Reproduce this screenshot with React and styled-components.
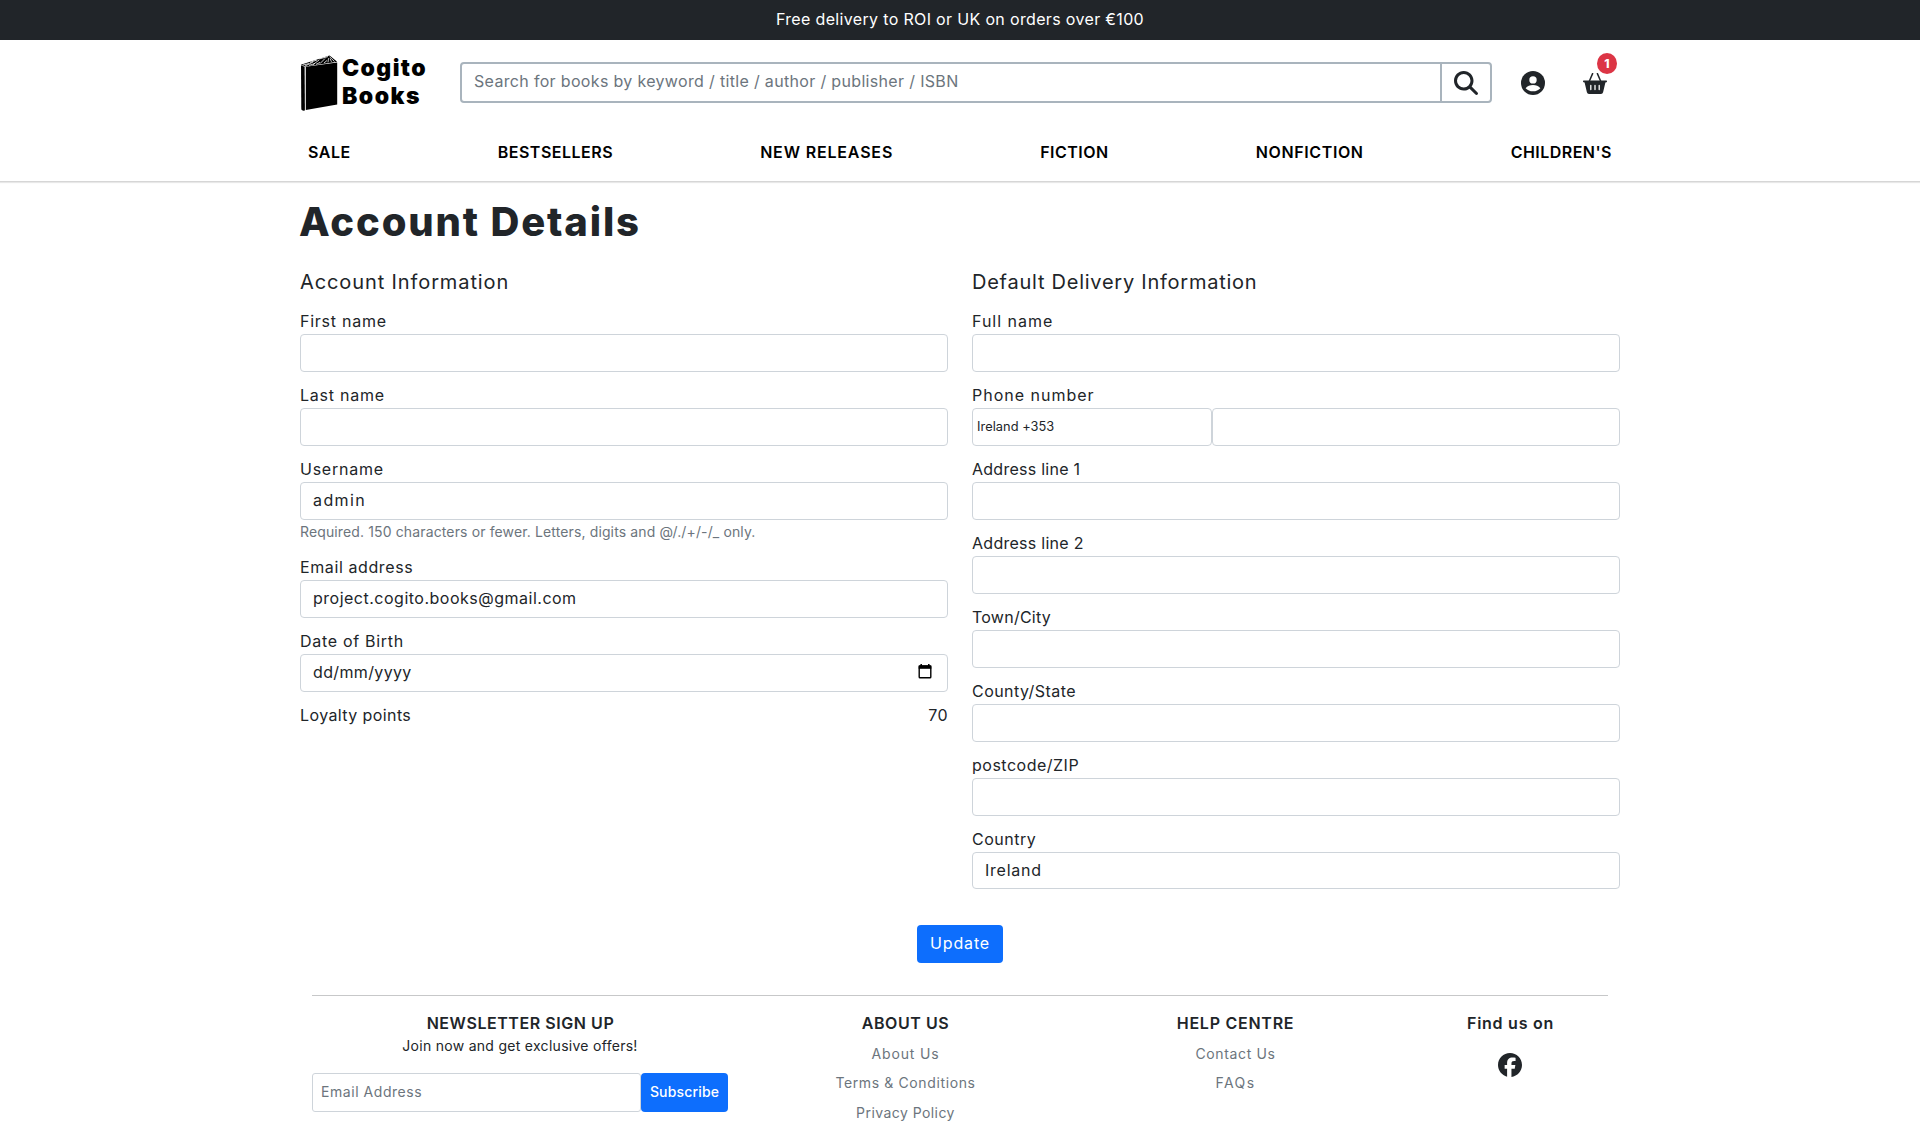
import React from "react";
import styled, { createGlobalStyle } from "styled-components";
import { FaFacebook, FaMagnifyingGlass } from "react-icons/fa6";

const GlobalStyle = createGlobalStyle`
  *, *::before, *::after { box-sizing: border-box; }
  body {
    margin: 0;
    background: #fff;
    color: #212529;
    font-family: Inter, "Open Sans", sans-serif;
    font-size: 16px;
    line-height: 24px;
  }
  input, button { font: inherit; color: inherit; }
  h1, h2, h3, p, ul { margin: 0; padding: 0; font-weight: 400; }
`;

/* Text with per-string tracking */
const Text = styled.span`
  letter-spacing: ${(p) => p.$track || 0}px;
  white-space: nowrap;
`;

const TopBar = styled.div`
  height: 40px;
  padding-top: 7px;
  background: #212529;
  color: #fff;
  text-align: center;
`;

const Header = styled.header`
  height: 142px;
  border-bottom: 1px solid #d6d6d6;
  box-shadow: 0 1px 1px rgba(0, 0, 0, 0.09);
`;

const Container = styled.div`
  width: 1320px;
  margin: 0 auto;
`;

const Brand = styled.div`
  display: flex;
  width: 160px;
  height: 59px;
`;

const BrandName = styled.div`
  margin: 0 0 0 4px;
  color: #000;
  font-size: 23px;
  font-weight: 900;
  line-height: 28px;
`;

const Line = styled.div`
  letter-spacing: ${(p) => p.$track}px;
`;

const HeaderRow = styled.div`
  display: flex;
  align-items: flex-start;
  height: 100px;
  padding-top: 14px;
`;

const SearchBox = styled.div`
  display: flex;
  width: 1032px;
  height: 41px;
  margin-top: 8px;
  border: 2px solid #a9b4bd;
  border-radius: 4px;
`;

const SearchInput = styled.input`
  flex: 1;
  min-width: 0;
  padding: 0 12px 3px;
  border: 0;
  background: none;
  letter-spacing: 0.33px;
  &::placeholder { color: #6c757d; opacity: 1; }
`;

const SearchButton = styled.button`
  display: flex;
  align-items: center;
  justify-content: center;
  width: 50px;
  padding: 0;
  border: 0;
  border-left: 2px solid #a9b4bd;
  background: none;
`;

const IconLink = styled.a`
  position: relative;
  display: flex;
  width: 24px;
  margin: ${(p) => p.$top}px 0 0 ${(p) => p.$gap}px;
  color: #212529;
`;

const Badge = styled.span`
  position: absolute;
  left: 14px;
  top: -20px;
  width: 20px;
  height: 21px;
  border-radius: 50%;
  background: #dc3545;
  color: #fff;
  font-size: 12px;
  font-weight: 800;
  line-height: 21px;
  text-align: center;
`;

const Nav = styled.nav`
  display: flex;
  justify-content: space-between;
  padding: 0 8px;
  color: #000;
  font-weight: 600;
`;

const Title = styled.h1`
  margin: 16px 0 0 -1px;
  font-size: 40px;
  font-weight: 800;
  line-height: 48px;
  letter-spacing: 1.84px;
`;

const Columns = styled.div`
  display: grid;
  grid-template-columns: 1fr 1fr;
  column-gap: 24px;
  margin-top: 24px;
`;

const Heading = styled.h2`
  margin-bottom: 15px;
  font-size: 20px;
  line-height: 24px;
`;

const Field = styled.div`
  margin-bottom: 11px;
`;

const Label = styled.label`
  display: block;
  padding-bottom: 1px;
`;

const Control = styled.div`
  display: flex;
  align-items: center;
  justify-content: space-between;
  width: ${(p) => p.$width || "100%"};
  height: ${(p) => p.$height || 38}px;
  padding: ${(p) => (p.$compact ? "0 4px" : "0 15px 2px 12px")};
  border: 1px solid #ced4da;
  border-radius: 4px;
  font-size: ${(p) => (p.$compact ? 12.8 : 16)}px;
`;

const Split = styled.div`
  display: flex;
`;

const Help = styled.div`
  height: 24px;
  margin: -0.5px 0 0.5px;
  color: #6c757d;
  font-size: 14px;
`;

const Points = styled.div`
  display: flex;
  justify-content: space-between;
`;

const Actions = styled.div`
  display: flex;
  justify-content: center;
  margin-top: 25px;
`;

const PrimaryButton = styled.button`
  width: ${(p) => p.$width}px;
  height: ${(p) => p.$height}px;
  padding: 0 0 ${(p) => (p.$size ? 1 : 3)}px;
  border: 0;
  border-radius: 4px;
  background: #0d6efd;
  color: #fff;
  font-size: ${(p) => p.$size || 16}px;
  font-weight: ${(p) => p.$weight || 400};
`;

const Divider = styled.div`
  height: 1px;
  margin: 32px 12px 15px;
  background: #c7c8c9;
`;

const FooterRow = styled.footer`
  display: flex;
`;

const FooterCol = styled.section`
  display: flex;
  flex-direction: column;
  align-items: center;
  width: ${(p) => p.$width}px;
  padding: 0 12px;
`;

const FooterTitle = styled.h3`
  padding-left: 1px;
  font-size: 16px;
  font-weight: 600;
`;

const Tagline = styled.p`
  font-size: 14px;
  line-height: 21px;
`;

const Subscribe = styled.form`
  display: flex;
  width: 100%;
  margin-top: 17px;
`;

const EmailInput = styled.input`
  flex: 1;
  min-width: 0;
  height: 39px;
  padding: 0 8px 2px;
  border: 1px solid #ced4da;
  border-radius: 3px;
  font-size: 14px;
  letter-spacing: 0.55px;
  &::placeholder { color: #6c757d; opacity: 1; }
`;

const Links = styled.ul`
  display: flex;
  flex-direction: column;
  gap: 5.4px;
  margin-top: 6.9px;
  padding-left: 1px;
  color: #6c757d;
  font-size: 14px;
  list-style: none;
  text-align: center;
`;

const Social = styled.div`
  display: flex;
  margin-top: 18px;
`;

const NAV = [
  ["SALE", 0.5],
  ["BESTSELLERS", 0.5],
  ["NEW RELEASES", 0.83],
  ["FICTION", 0.5],
  ["NONFICTION", 0.62],
  ["CHILDREN'S", 0.46],
];

const ADDRESS = [
  ["Address line 1", 0.26],
  ["Address line 2", 0.27],
  ["Town/City", 0.24],
  ["County/State", 0.45],
  ["postcode/ZIP", 0.5],
];

const ABOUT = [
  ["About Us", 0.83],
  ["Terms & Conditions", 0.62],
  ["Privacy Policy", 0.44],
];

const HELP = [
  ["Contact Us", 0.64],
  ["FAQs", 1.4],
];

function BookLogo() {
  return (
    <svg width="38" height="58" viewBox="0 0 38 58">
      <path d="M1 11.2 L4.6 12.8 L4.9 56.6 L3 56.8 L1.3 55.4 Z" fill="#000" />
      <path d="M5.8 12.8 L37.2 8.6 V50.4 L5.8 56 Z" fill="#000" />
      <path d="M0.8 10.8 L29.5 1.6 L37.2 7.8 L5.4 12.4 Z" fill="#000" />
      <path
        d="M3 11 L9 9.6 M5 12 L13 8 M9 11.4 L15 9.5 M13 10.7 L19 6 M16 10.4 L20 8.4 M10 8.4 L17 6 M20 9.6 L25 4.5 M24 9 L27 6.5 M19 5 L28 2.6 M28 8.4 L28.5 4.2 M31.5 7.8 L30 4.5 M34.5 7.5 L29.6 2.8"
        stroke="#fff"
        strokeWidth="0.8"
      />
    </svg>
  );
}

function UserIcon() {
  return (
    <svg width="24" height="24" viewBox="0 0 24 24">
      <circle cx="12" cy="12" r="12" fill="currentColor" />
      <circle cx="12" cy="8.9" r="3.7" fill="#fff" />
      <path d="M4.6 17.2 C6.4 14.9 9 14.1 12 14.1 S17.6 14.9 19.4 17.2 C17.5 19.3 15 20.3 12 20.3 S6.5 19.3 4.6 17.2 Z" fill="#fff" />
    </svg>
  );
}

function BasketIcon() {
  return (
    <svg width="24" height="22" viewBox="0 0 24 22">
      <path d="M9.6 0.6 L6.4 8 M14.4 0.6 L17.6 8" stroke="currentColor" strokeWidth="1.5" strokeLinecap="round" />
      <path d="M0.6 7.5 H23.4 Q24 7.5 24 8.2 Q24 9 23.4 9.2 L22.4 9.6 L20.1 19.3 Q19.7 21 18 21 H6 Q4.3 21 3.9 19.3 L1.6 9.6 L0.6 9.2 Q0 9 0 8.2 Q0 7.5 0.6 7.5 Z" fill="currentColor" />
      <path d="M7.8 12.5 V16.6 M12 12.5 V16.6 M16.2 12.5 V16.6" stroke="#fff" strokeWidth="1.3" strokeLinecap="round" />
    </svg>
  );
}

function CalendarIcon() {
  return (
    <svg width="14" height="15" viewBox="0 0 14 15">
      <path d="M3.2 0 V2 M10.8 0 V2" stroke="#000" strokeWidth="1.5" />
      <rect x="1.2" y="2" width="11.6" height="11.8" rx="0.8" fill="none" stroke="#000" strokeWidth="1.4" />
      <rect x="0.7" y="1.4" width="12.6" height="3.4" fill="#000" />
    </svg>
  );
}

function FormField({ label, track, value, valueTrack, height, children, help }) {
  return (
    <Field>
      <Label>
        <Text $track={track}>{label}</Text>
      </Label>
      <Control $height={height}>
        <Text $track={valueTrack}>{value}</Text>
        {children}
      </Control>
      {help}
    </Field>
  );
}

export default function App() {
  return (
    <>
      <GlobalStyle />
      <TopBar>
        <Text $track={0.34}>Free delivery to ROI or UK on orders over €100</Text>
      </TopBar>
      <Header>
        <Container>
          <HeaderRow>
            <Brand>
              <BookLogo />
              <BrandName>
                <Line $track={1.4}>Cogito</Line>
                <Line $track={1.5}>Books</Line>
              </BrandName>
            </Brand>
            <SearchBox>
              <SearchInput placeholder="Search for books by keyword / title / author / publisher / ISBN" />
              <SearchButton aria-label="Search">
                <FaMagnifyingGlass size={24} />
              </SearchButton>
            </SearchBox>
            <IconLink $top={17} $gap={29}>
              <UserIcon />
            </IconLink>
            <IconLink $top={19} $gap={38}>
              <BasketIcon />
              <Badge>1</Badge>
            </IconLink>
          </HeaderRow>
          <Nav>
            {NAV.map(([name, track]) => (
              <Text key={name} $track={track}>{name}</Text>
            ))}
          </Nav>
        </Container>
      </Header>

      <Container>
        <Title>Account Details</Title>
        <Columns>
          <div>
            <Heading>
              <Text $track={0.89}>Account Information</Text>
            </Heading>
            <FormField label="First name" track={0.75} />
            <FormField label="Last name" track={0.75} />
            <FormField
              label="Username"
              track={0.75}
              value="admin"
              valueTrack={1.4}
              help={
                <Help>
                  <Text $track={0.13}>Required. 150 characters or fewer. Letters, digits and @/./+/-/_ only.</Text>
                </Help>
              }
            />
            <FormField label="Email address" track={0.6} value="project.cogito.books@gmail.com" valueTrack={0.5} />
            <FormField label="Date of Birth" track={0.7} value="dd/mm/yyyy" valueTrack={0.36}>
              <CalendarIcon />
            </FormField>
            <Points>
              <Text $track={0.4}>Loyalty points</Text>
              <Text $track={0.4}>70</Text>
            </Points>
          </div>
          <div>
            <Heading>
              <Text $track={0.75}>Default Delivery Information</Text>
            </Heading>
            <FormField label="Full name" track={0.98} />
            <Field>
              <Label>
                <Text $track={1}>Phone number</Text>
              </Label>
              <Split>
                <Control $width="240px" $compact>
                  <Text $track={0.05}>Ireland +353</Text>
                </Control>
                <Control $width="408px" />
              </Split>
            </Field>
            {ADDRESS.map(([label, track]) => (
              <FormField key={label} label={label} track={track} />
            ))}
            <FormField label="Country" track={0.5} value="Ireland" valueTrack={0.75} height={37} />
          </div>
        </Columns>
        <Actions>
          <PrimaryButton $width={86} $height={38}>
            <Text $track={0.84}>Update</Text>
          </PrimaryButton>
        </Actions>
        <Divider />
        <FooterRow>
          <FooterCol $width={440}>
            <FooterTitle>
              <Text $track={0.56}>NEWSLETTER SIGN UP</Text>
            </FooterTitle>
            <Tagline>
              <Text $track={0.285}>Join now and get exclusive offers!</Text>
            </Tagline>
            <Subscribe>
              <EmailInput placeholder="Email Address" />
              <PrimaryButton type="button" $width={87} $height={39} $size={14} $weight={500}>
                <Text $track={0.16}>Subscribe</Text>
              </PrimaryButton>
            </Subscribe>
          </FooterCol>
          <FooterCol $width={330}>
            <FooterTitle>
              <Text $track={0.53}>ABOUT US</Text>
            </FooterTitle>
            <Links>
              {ABOUT.map(([name, track]) => (
                <li key={name}>
                  <Text $track={track}>{name}</Text>
                </li>
              ))}
            </Links>
          </FooterCol>
          <FooterCol $width={330}>
            <FooterTitle>
              <Text $track={0.74}>HELP CENTRE</Text>
            </FooterTitle>
            <Links>
              {HELP.map(([name, track]) => (
                <li key={name}>
                  <Text $track={track}>{name}</Text>
                </li>
              ))}
            </Links>
          </FooterCol>
          <FooterCol $width={220}>
            <FooterTitle>
              <Text $track={0.74}>Find us on</Text>
            </FooterTitle>
            <Social>
              <FaFacebook size={24} />
            </Social>
          </FooterCol>
        </FooterRow>
      </Container>
    </>
  );
}
